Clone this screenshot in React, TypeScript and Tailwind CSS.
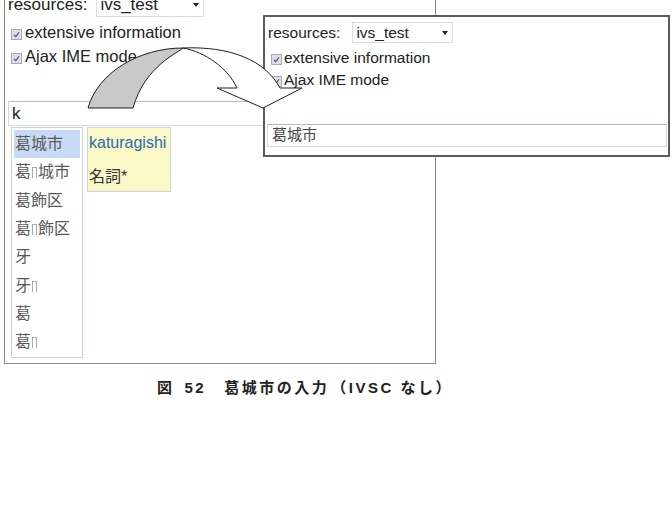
const font = "font-['Liberation_Sans','Noto_Sans_CJK_JP',sans-serif]";

function CheckBox() {
  return (
    <span className="inline-flex items-center justify-center w-[11px] h-[11px] border border-[#a9a9b6] bg-[#dddde6] shrink-0">
      <svg width="7" height="7" viewBox="0 0 7 7">
        <path d="M1 3.8 L2.8 5.6 L6 1.2" fill="none" stroke="#3b4a8c" strokeWidth="1.1" />
      </svg>
    </span>
  );
}

function Caret() {
  return (
    <span className="ml-auto w-0 h-0 border-l-[3px] border-r-[3px] border-t-[4px] border-l-transparent border-r-transparent border-t-[#222]" />
  );
}

function Ivs() {
  return (
    <span className="inline-block w-[5px] h-[11px] mx-[1px] border border-b-0 border-[#aaa] align-[-1px]" />
  );
}

const candidates: React.ReactNode[] = [
  "葛城市",
  <>葛<Ivs />城市</>,
  "葛飾区",
  <>葛<Ivs />飾区</>,
  "牙",
  <>牙<Ivs /></>,
  "葛",
  <>葛<Ivs /></>,
];

function Arrow() {
  return (
    <svg className="absolute left-0 top-0 pointer-events-none" width="672" height="512" viewBox="0 0 672 512">
      <path
        d="M88 108 C98 72, 140 48, 183 48 C180 52, 145 65, 133 108 Z"
        fill="#c9c9c9"
        stroke="#1e1e1e"
        strokeWidth="1"
      />
      <path
        d="M183 48 C230 46, 265 60, 280 88 L302 88 L263 108 L217 88 L237 88 C228 68, 205 52, 183 48 Z"
        fill="#fff"
        stroke="#1e1e1e"
        strokeWidth="1"
      />
    </svg>
  );
}

export default function App() {
  return (
    <div className={`relative w-[672px] h-[512px] overflow-hidden bg-white ${font}`}>
      {/* before: big screenshot */}
      <div className="ml-[4px] mt-[-14px] w-[432px] h-[378px] border border-[#8a8a8a] pl-[3px] pt-[6px] text-[16.5px] text-[#222]">
        <div className="flex items-center h-[24px]">
          <span className="text-[17px]">resources:</span>
          <div className="ml-[9px] w-[108px] h-[24px] border border-[#dcdcdc] flex items-center pl-[3px] pr-[4px] text-[17px]">
            ivs_test
            <Caret />
          </div>
        </div>
        <div className="flex items-center h-[24px] mt-[3px]">
          <span className="ml-[3px]">
            <CheckBox />
          </span>
          <span className="ml-[3px]">extensive information</span>
        </div>
        <div className="flex items-center h-[24px]">
          <span className="ml-[3px]">
            <CheckBox />
          </span>
          <span className="ml-[3px]">Ajax IME mode</span>
        </div>
        <div className="mt-[33px] w-[426px] h-[25px] border border-[#d2dada] border-t-[#aebfbf] flex items-center pl-[3px] text-[17px]">
          k
        </div>
        <div className="flex items-start mt-[1px]">
          <div className="ml-[3px] w-[72px] h-[231px] border border-[#c6d3e3] p-[2px] text-[16px] text-[#5a5a5a]">
            {candidates.map((c, i) => (
              <div
                key={i}
                className={`h-[28.3px] flex items-center pl-[1px] ${i === 0 ? "bg-[#c7daf5]" : ""}`}
              >
                <span>{c}</span>
              </div>
            ))}
          </div>
          <div className="ml-[4px] w-[84px] h-[65px] bg-[#fbf8c7] border border-[#ccd6db] pl-[1px] text-[16px]">
            <div className="h-[30px] flex items-center text-[#2a6cb0]">katuragishi</div>
            <div className="mt-[4px] h-[30px] flex items-center text-[#333]">名詞*</div>
          </div>
        </div>
      </div>

      {/* caption */}
      <div className="mt-[14px] ml-[157px] h-[20px] flex items-center text-[15px] font-bold text-[#222] tracking-[2.5px]">
        <span>図</span>
        <span className="ml-[10px]">52</span>
        <span className="ml-[18px]">葛城市の入力</span>
        <span className="ml-[2px]">（IVSC なし）</span>
      </div>

      {/* after: small screenshot */}
      <div className="absolute left-[263px] top-[15px] w-[407px] h-[142px] border-2 border-[#5c5c5c] bg-white pl-[3px] pt-[5px] text-[15.5px] text-[#222]">
        <div className="flex items-center h-[21px]">
          <span>resources:</span>
          <div className="ml-[12px] w-[101px] h-[21px] border border-[#dcdcdc] flex items-center pl-[3px] pr-[4px]">
            ivs_test
            <Caret />
          </div>
        </div>
        <div className="flex items-center h-[22px] mt-[4px]">
          <span className="ml-[3px]">
            <CheckBox />
          </span>
          <span className="ml-[2px]">extensive information</span>
        </div>
        <div className="flex items-center h-[22px]">
          <span className="ml-[3px]">
            <CheckBox />
          </span>
          <span className="ml-[2px]">Ajax IME mode</span>
        </div>
        <div className="mt-[33px] ml-[-1px] w-[400px] h-[23px] border border-[#d2dada] border-t-[#aebfbf] flex items-center pl-[4px] text-[15px] text-[#444]">
          葛城市
        </div>
      </div>

      <Arrow />
    </div>
  );
}
